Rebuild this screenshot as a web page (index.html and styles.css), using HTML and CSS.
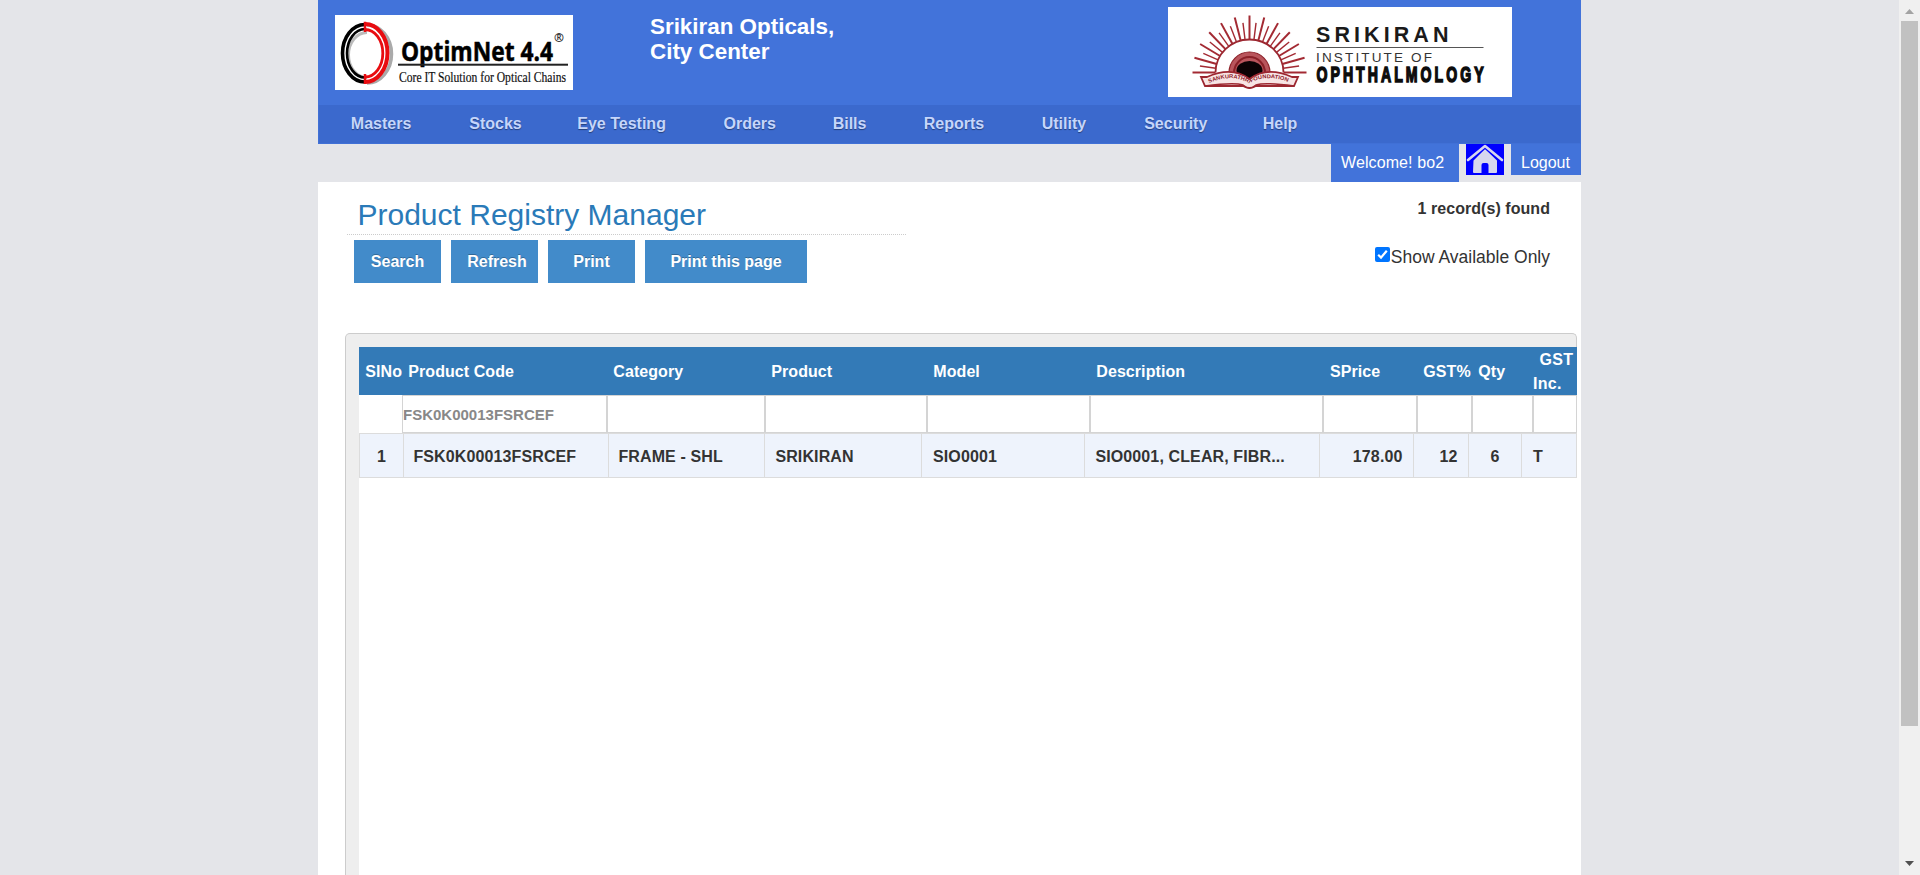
FILE: index.html
```html
<!DOCTYPE html>
<html lang="en">
<head>
<meta charset="utf-8">
<title>Product Registry Manager</title>
<link rel="stylesheet" href="styles.css">
<script src="sun.js" defer></script>
</head>
<body>
<div class="viewport">
  <div class="page">
    <header class="header">
      <svg class="logo-optim" width="238" height="75" viewBox="0 0 238 75">
        <rect width="238" height="75" fill="#fff"/>
        <g fill="none">
          <path d="M32 10 A24.500 29 0 0 1 32 68" stroke="#aaa" stroke-width="3.500"/>
          <path d="M32 17.500 A18.500 22.500 0 0 0 32 62.500" stroke="#bbb" stroke-width="3"/>
          <path d="M30 9.500 A22.500 28.750 0 0 0 30 67" stroke="#000" stroke-width="3.600"/>
          <path d="M30 14 A18 24.250 0 0 0 30 62.500" stroke="#000" stroke-width="2.600"/>
          <path d="M30 9 A22.500 29 0 0 1 30 67" stroke="#e80c10" stroke-width="4"/>
          <path d="M30 14.500 A17.800 23.750 0 0 1 30 62" stroke="#e80c10" stroke-width="2.800"/>
          <path d="M30 6.700 V17 M30 59 V69" stroke="#e80c10" stroke-width="2.500"/>
        </g>
        <text class="optim-name" x="66" y="45.500" textLength="152" lengthAdjust="spacingAndGlyphs">OptimNet 4.4</text>
        <text class="optim-reg" x="219" y="27" textLength="10" lengthAdjust="spacingAndGlyphs">®</text>
        <rect x="63" y="48.700" width="170" height="2" fill="#222"/>
        <text class="optim-tag" x="64" y="67" textLength="167" lengthAdjust="spacingAndGlyphs">Core IT Solution for Optical Chains</text>
      </svg>
      <div class="store">Srikiran Opticals,<br>City Center</div>
      <svg class="logo-srikiran" width="344" height="90" viewBox="0 0 344 90">
        <rect width="344" height="90" fill="#fff"/>
        <g id="rays" stroke="#a32a33"></g>
        <path d="M47.500 65.500 A34 33 0 0 1 115.500 65.500" fill="#fff" stroke="#9c2730" stroke-width="1.800"/>
        <path d="M61 66 A20.500 21 0 0 1 102 66 L81.500 74 Z" fill="#b9555c" stroke="#8f232b" stroke-width="1.200"/>
        <path d="M66 66 A15.500 16 0 0 1 97 66" fill="none" stroke="#8a2028" stroke-width="2"/>
        <ellipse cx="81.500" cy="63.500" rx="13" ry="9.500" fill="#0b0204"/>
        <path d="M33 70 L39 70 Q64 59 81.500 72 Q99 59 124 70 L130 70 L126 79 L88 79 Q81.500 83 75 79 L37 79 Z" fill="#f7e4e4" stroke="#9c2730" stroke-width="1.800"/>
        <path d="M37 79 Q66 75 75 78 Q81.500 84 88 78 Q97 75 126 79" fill="none" stroke="#9c2730" stroke-width="1.600"/>
        <path id="band" d="M41 76 Q64 66 81.500 76.500 Q99 66 123 76" fill="none"/>
        <text class="band-text"><textPath href="#band" textLength="82" lengthAdjust="spacingAndGlyphs">SANKURATHRI FOUNDATION</textPath></text>
        <text class="sk-name" x="148" y="35" textLength="132.500">SRIKIRAN</text>
        <rect x="148.500" y="40" width="167" height="1" fill="#555"/>
        <text class="sk-inst" x="148" y="55" textLength="116">INSTITUTE OF</text>
        <text class="sk-oph" transform="translate(148.500 75) scale(.64 1)" textLength="261">OPHTHALMOLOGY</text>
      </svg>
    </header>
    <nav class="nav">
      <span>Masters</span><span>Stocks</span><span>Eye Testing</span><span>Orders</span><span>Bills</span><span>Reports</span><span>Utility</span><span>Security</span><span>Help</span>
    </nav>
    <div class="userbar">
      <span class="welcome">Welcome! bo2</span>
      <svg class="home" width="38" height="31" viewBox="0 0 38 31">
        <rect width="38" height="31" fill="#00f"/>
        <path d="M7.500 16.500 L19 5 L31 16.500 V28 Q31 29 30 29 H22.500 V21 Q22.500 19 20.500 19 H17.500 Q15.500 19 15.500 21 V29 H8 Q7 29 7 28 Z" fill="#d6d6ee"/>
        <path d="M2 16 L19 2 L36 16" fill="none" stroke="#00f" stroke-width="4.600"/>
        <path d="M2 16 L19 2 L36 16" fill="none" stroke="#d6d6ee" stroke-width="2.600" stroke-linejoin="round" stroke-linecap="round"/>
      </svg>
      <span class="logout">Logout</span>
    </div>
    <main class="content">
      <div class="top">
        <div class="top-left">
          <h1 class="title">Product Registry Manager</h1>
          <div class="actions">
            <button class="btn">Search</button>
            <button class="btn btn-refresh">Refresh</button>
            <button class="btn">Print</button>
            <button class="btn btn-wide">Print this page</button>
          </div>
        </div>
        <div class="top-right">
          <div class="count">1 record(s) found</div>
          <div class="avail">
            <svg width="15" height="15" viewBox="0 0 15 15"><rect width="15" height="15" rx="2" fill="#0075ff"/><path d="M3.200 7.800 L6 10.600 L11.800 3.700" fill="none" stroke="#fff" stroke-width="2.200"/></svg>
            <span>Show Available Only</span>
          </div>
        </div>
      </div>
      <section class="panel">
        <div class="sheet">
          <div class="cols head">
            <span>SlNo</span><span>Product Code</span><span>Category</span><span>Product</span><span>Model</span><span>Description</span><span class="price">SPrice</span><span>GST%</span><span>Qty</span><span class="inc">GST<br>Inc.</span>
          </div>
          <div class="cols filter">
            <i></i><b>FSK0K00013FSRCEF</b><b></b><b></b><b></b><b></b><b></b><b></b><b></b><b></b>
          </div>
          <div class="row">
            <span class="mid">1</span><span class="near">FSK0K00013FSRCEF</span><span class="near">FRAME - SHL</span><span>SRIKIRAN</span><span class="far">SIO0001</span><span>SIO0001, CLEAR, FIBR...</span><span class="num">178.00</span><span class="num">12</span><span class="mid">6</span><span class="far">T</span>
          </div>
        </div>
      </section>
    </main>
  </div>
  <div class="scrollbar">
    <svg width="21" height="21" viewBox="0 0 21 21"><path d="M6 14 L10.500 9 L15 14 Z" fill="#a3a3a3"/></svg>
    <div class="thumb"></div>
    <svg width="21" height="21" viewBox="0 0 21 21"><path d="M6 7 L10.500 12 L15 7 Z" fill="#505050"/></svg>
  </div>
</div>
</body>
</html>
```
FILE: styles.css
```css
* { box-sizing: border-box; }
body {
  margin: 0;
  background: #e4e5e9;
  color: #333;
  font: 16px "Liberation Sans", Arial, sans-serif;
}
.viewport { display: flex; height: 875px; overflow: hidden; }
.page { display: flex; flex-direction: column; width: 1263px; margin-left: 318px; }

.header { display: flex; align-items: flex-start; height: 105px; background: #4273da; }
.logo-optim { margin: 15px 0 0 17px; flex: none; }
.store { width: 518px; margin: 14px 0 0 77px; color: #fff; font-size: 22.4px; font-weight: bold; line-height: 25px; }
.logo-srikiran { margin-top: 7px; flex: none; }
.optim-name { font: 700 26.500px "Open Sans", "Noto Sans", sans-serif; fill: #000; stroke: #000; stroke-width: .5; }
.optim-reg { font: 700 12px "Noto Sans", sans-serif; fill: #333; }
.optim-tag { font: 14.500px "Liberation Serif", serif; fill: #111; stroke: #111; stroke-width: .2; }
.sk-name { font: bold 21.500px "Liberation Sans", sans-serif; fill: #1a1a1a; }
.sk-inst { font: 13.500px "Liberation Sans", sans-serif; fill: #333; }
.sk-oph { font: bold 22px "Liberation Sans", sans-serif; fill: #0c0c0c; stroke: #0c0c0c; stroke-width: 1.6; }
.band-text { font: bold 5.500px "Liberation Sans", sans-serif; fill: #8f232b; }

.nav {
  display: grid;
  grid-template-columns: 118.500px 108px 146.200px 109.200px 91px 118px 102.500px 118.500px auto;
  height: 39px;
  padding-left: 31.800px;
  border: 1px solid #4070d6;
  border-top: 0;
  background: #3b69cd;
  color: #c5d6fb;
  font-weight: bold;
  line-height: 37px;
  text-shadow: 0 1px 1px rgba(0, 0, 0, .4);
}

.userbar { display: flex; justify-content: flex-end; align-items: flex-start; height: 38px; color: #fff; }
.welcome { width: 128px; height: 38px; padding-left: 10px; background: #4273da; line-height: 37px; letter-spacing: .1px; }
.home { margin: 0 7px; }
.logout { width: 70px; height: 31px; padding-left: 10px; background: #4273da; line-height: 37px; }

.content { display: flex; flex-direction: column; flex: 1; background: #fff; padding-left: 27px; }
.top { display: flex; justify-content: space-between; height: 151px; padding-right: 31px; }
.top-left { width: 561px; padding-left: 2px; }
.title { height: 53px; margin: 0; padding-left: 10.500px; border-bottom: 1px dotted #ccc; color: #2a7ab8; font-size: 30px; font-weight: normal; line-height: 65px; }
.actions { display: flex; gap: 10px; padding: 5px 0 0 7px; }
.btn { width: 87px; height: 43px; padding: 1px 0 0; border: 0; background: #428bca; color: #fff; font: bold 16px "Liberation Sans", Arial, sans-serif; text-shadow: 0 -1px 0 rgba(0, 0, 0, .25); }
.btn-refresh { padding-left: 5px; }
.btn-wide { width: 162px; }
.top-right { display: flex; flex-direction: column; align-items: flex-end; padding-top: 18px; }
.count { font-weight: bold; line-height: 18px; letter-spacing: .05px; }
.avail { display: flex; gap: 1px; margin-top: 29px; font-size: 17.500px; line-height: 20px; }

.panel { flex: 1; width: 1232px; padding: 13px 0 0 13px; border: 1px solid #ccc; border-bottom: 0; border-radius: 5px 5px 0 0; background: #eee; }
.sheet { width: 1218px; height: 100%; background: #fff; }
.cols { display: grid; grid-template-columns: 43px 205px 158px 162px 163px 233px 94px 55px 61px 44px; }
.head { height: 48px; background: #337ab7; color: #fff; font-weight: bold; line-height: 50px; letter-spacing: .07px; }
.head span { height: 48px; padding-left: 6.300px; white-space: nowrap; }
.head .price { padding-left: 7px; }
.head .inc { padding: 1px 0 0; line-height: 24px; text-indent: 6.500px; letter-spacing: .3px; }
.filter { height: 38px; color: #888; font-size: 15px; line-height: 37px; }
.filter b { height: 38px; border: 1px solid #d4d4d4; white-space: nowrap; }
.row {
  display: grid;
  grid-template-columns: 44px 205px 156px 157px 163px 235px 94px 55px 53px 55px;
  height: 45px;
  border: 1px solid #dcdcdc;
  border-right: 0;
  background: #eef3fc;
  font-weight: bold;
  line-height: 45px;
  letter-spacing: .12px;
}
.row span { height: 43px; padding-left: 10.400px; border-right: 1px solid #dcdcdc; white-space: nowrap; }
.row .near { padding-left: 9.400px; }
.row .far { padding-left: 11px; }
.row .mid { padding: 0; text-align: center; }
.row .num { padding: 0 10.500px 0 0; text-align: right; }

.scrollbar { display: flex; flex-direction: column; width: 21px; margin-left: auto; background: #f0f0f0; }
.scrollbar svg { flex: none; }
.thumb { width: 17px; height: 705px; margin: 0 2px 128px; background: #c1c1c1; flex: none; }
```
FILE: sun.js
```javascript
// Long rays every 15 degrees, with a shorter, thinner one between each pair.
const rays = document.getElementById("rays");
for (let i = 0; i <= 24; i++) {
  const a = (i * 7.5 * Math.PI) / 180;
  const outer = i % 2 ? 50 : 57;
  const line = document.createElementNS("http://www.w3.org/2000/svg", "line");
  line.setAttribute("x1", 81.5 - 34 * Math.cos(a));
  line.setAttribute("y1", 65.5 - 33 * Math.sin(a));
  line.setAttribute("x2", 81.5 - outer * Math.cos(a));
  line.setAttribute("y2", 65.5 - outer * Math.sin(a));
  line.setAttribute("stroke-width", i % 2 ? 1.4 : 2);
  rays.appendChild(line);
}
```
